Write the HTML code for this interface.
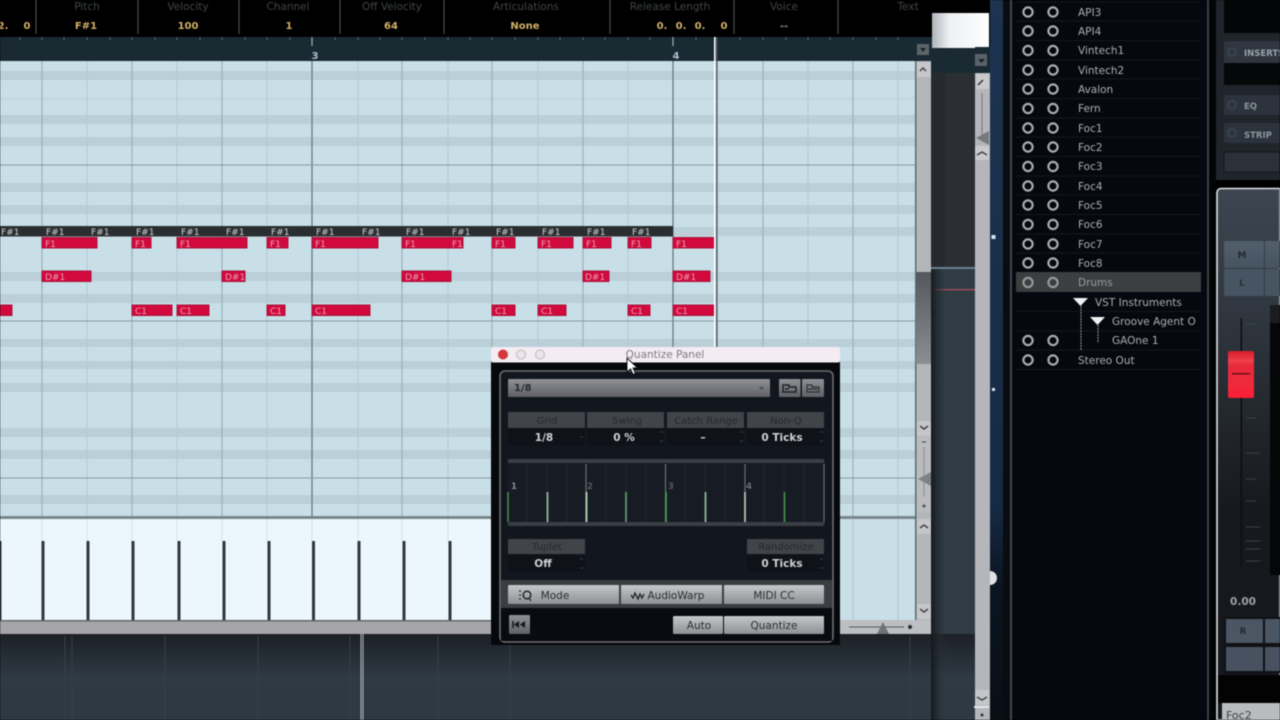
<!DOCTYPE html>
<html><head><meta charset="utf-8"><title>Quantize Panel</title>
<style>
html,body{margin:0;padding:0;background:#000;width:1280px;height:720px;overflow:hidden}
svg{display:block;filter:blur(.55px);overflow:hidden}
text{font-family:"DejaVu Sans","Liberation Sans",sans-serif}
.h{font-size:10.5px;fill:#3f4549;text-anchor:middle}
.v{font-size:10px;fill:#d2b068;font-weight:bold;text-anchor:middle}
.n{font-size:9px;fill:#e8a0b4}
.f{font-size:9px;fill:#d0d2d4}
.l{font-size:10.5px;fill:#abaeb2}
.q{font-size:10px;fill:#25292e;text-anchor:middle}
.w{font-size:10.5px;fill:#cfd1d4;font-weight:bold;text-anchor:middle}
.b{font-size:10.5px;fill:#2a2d31;text-anchor:middle}
</style></head><body>
<svg width="1280" height="720" viewBox="0 0 1280 720" xmlns="http://www.w3.org/2000/svg">
<defs>
<linearGradient id="dk" x1="0" y1="0" x2="0" y2="1"><stop offset="0" stop-color="#1c2026"/><stop offset=".5" stop-color="#2f3a43"/><stop offset="1" stop-color="#2e3943"/></linearGradient>
<linearGradient id="wb" x1="0" y1="0" x2="1" y2="0"><stop offset="0" stop-color="#aeb4ba"/><stop offset=".3" stop-color="#eef0f3"/><stop offset="1" stop-color="#fff"/></linearGradient>
<linearGradient id="dd" x1="0" y1="0" x2="0" y2="1"><stop offset="0" stop-color="#8f9196"/><stop offset="1" stop-color="#5f6166"/></linearGradient>
<linearGradient id="bt" x1="0" y1="0" x2="0" y2="1"><stop offset="0" stop-color="#c6c7ca"/><stop offset="1" stop-color="#8e9094"/></linearGradient>
<linearGradient id="st" x1="0" y1="0" x2="0" y2="1"><stop offset="0" stop-color="#3d4651"/><stop offset=".3" stop-color="#2c323a"/><stop offset=".6" stop-color="#17191e"/><stop offset="1" stop-color="#15181d"/></linearGradient>
<linearGradient id="ms" x1="0" y1="0" x2="0" y2="1"><stop offset="0" stop-color="#525f6c"/><stop offset="1" stop-color="#465361"/></linearGradient>
<linearGradient id="red" x1="0" y1="0" x2="0" y2="1"><stop offset="0" stop-color="#d81c2a"/><stop offset=".22" stop-color="#f0404c"/><stop offset=".3" stop-color="#e8293a"/><stop offset=".7" stop-color="#ee2a3c"/><stop offset="1" stop-color="#ff1d35"/></linearGradient>
<linearGradient id="th" x1="0" y1="0" x2="0" y2="1"><stop offset="0" stop-color="#54585c"/><stop offset="1" stop-color="#8b8e92"/></linearGradient>
<linearGradient id="bl" x1="0" y1="0" x2="0" y2="1"><stop offset="0" stop-color="#1d3450"/><stop offset=".7" stop-color="#172a45"/><stop offset=".82" stop-color="#0b1420"/><stop offset="1" stop-color="#0a0f16"/></linearGradient>
<linearGradient id="sh" x1="0" y1="0" x2="1" y2="0"><stop offset="0" stop-color="#14181c"/><stop offset="1" stop-color="#2d3840" stop-opacity="0"/></linearGradient>
</defs>

<rect width="1280" height="720" fill="#000"/>

<!-- info bar -->
<rect x="0" y="0" width="932" height="37" fill="#000"/>
<g stroke="#4a4c4d" stroke-width="1.2"><path d="M36 0V34M138 0V34M239 0V34M340 0V34M444 0V34M610 0V34M734 0V34M838 0V34"/></g>
<text class="h" x="87" y="10">Pitch</text><text class="h" x="188" y="10">Velocity</text><text class="h" x="288" y="10">Channel</text><text class="h" x="392" y="10">Off Velocity</text><text class="h" x="526" y="10">Articulations</text><text class="h" x="670" y="10">Release Length</text><text class="h" x="784" y="10">Voice</text><text class="h" x="908" y="10">Text</text>
<text class="v" x="3" y="29">2.</text><text class="v" x="27" y="29">0</text><text class="v" x="86" y="29">F#1</text><text class="v" x="188" y="29">100</text><text class="v" x="289" y="29">1</text><text class="v" x="391" y="29">64</text><text class="v" x="525" y="29">None</text>
<text class="v" x="662" y="29">0.</text><text class="v" x="681" y="29">0.</text><text class="v" x="700" y="29">0.</text><text class="v" x="724" y="29">0</text>
<text class="v" x="784" y="29" style="fill:#888">--</text>

<!-- ruler -->
<rect x="0" y="37" width="932" height="24" fill="#1a2a33"/>
<g stroke="#5c6a72" stroke-width="1"><path d="M20 37v3M42 37v3M64 37v3M87 37v3M110 37v3M132 37v3M155 37v3M177 37v3M200 37v3M222 37v3M245 37v3M267 37v3M290 37v3M335 37v3M358 37v3M380 37v3M402 37v3M425 37v3M448 37v3M470 37v3M492 37v3M515 37v3M538 37v3M560 37v3M583 37v3M605 37v3M628 37v3M650 37v3M696 37v3M740 37v3M763 37v3M786 37v3M808 37v3M830 37v3M853 37v3M876 37v3M898 37v3"/></g>
<path d="M312 37v9M673 37v9" stroke="#9fb0ba" stroke-width="1.2"/>
<text x="315" y="59" font-size="10" font-weight="bold" fill="#a9c0cc" text-anchor="middle">3</text>
<text x="676" y="59" font-size="10" font-weight="bold" fill="#a9c0cc" text-anchor="middle">4</text>

<!-- grid -->
<rect x="0" y="61" width="916" height="457" fill="#c9dfe8"/>
<g fill="#bbcfd9">
<rect x="0" y="71" width="916" height="9"/><rect x="0" y="97" width="916" height="3" fill="#c3d8e2"/><rect x="0" y="115" width="916" height="9"/><rect x="0" y="137" width="916" height="9"/><rect x="0" y="183" width="916" height="9"/><rect x="0" y="205" width="916" height="9"/><rect x="0" y="227" width="916" height="9"/><rect x="0" y="272" width="916" height="9"/><rect x="0" y="294" width="916" height="9"/><rect x="0" y="339" width="916" height="8"/><rect x="0" y="361" width="916" height="8"/><rect x="0" y="383" width="916" height="9"/><rect x="0" y="428" width="916" height="9"/><rect x="0" y="450" width="916" height="9"/><rect x="0" y="495" width="916" height="9"/>
</g>
<g stroke="#b2c8d2" stroke-width="1"><path d="M87 61V518M177 61V518M267 61V518M358 61V518M448 61V518M538 61V518M628 61V518M718 61V518M808 61V518M898 61V518"/></g>
<g stroke="#9ab1bb" stroke-width="1.200"><path d="M42 61V518M132 61V518M222 61V518M402 61V518M492 61V518M583 61V518M763 61V518M853 61V518"/></g>
<g stroke="#61747e" stroke-width="1.200"><path d="M312 61V518M673 61V518"/></g>
<g stroke="#84999f" stroke-width="1"><path d="M0 165H916M0 321H916M0 478H916"/></g>

<!-- F#1 strip -->
<rect x="0" y="226" width="673" height="10.5" fill="#2b2e31"/>
<text class="f" x="1" y="235">F#1</text><text class="f" x="46" y="235">F#1</text><text class="f" x="91" y="235">F#1</text><text class="f" x="136" y="235">F#1</text><text class="f" x="181" y="235">F#1</text><text class="f" x="226" y="235">F#1</text><text class="f" x="271" y="235">F#1</text><text class="f" x="316" y="235">F#1</text><text class="f" x="362" y="235">F#1</text><text class="f" x="406" y="235">F#1</text><text class="f" x="452" y="235">F#1</text><text class="f" x="496" y="235">F#1</text><text class="f" x="542" y="235">F#1</text><text class="f" x="587" y="235">F#1</text><text class="f" x="632" y="235">F#1</text>

<!-- notes -->
<g fill="#d2093c" stroke="#a8133c" stroke-width="1">
<rect x="42" y="237.5" width="55" height="10.5"/><rect x="132" y="237.5" width="19" height="10.5"/><rect x="177" y="237.5" width="70" height="10.5"/><rect x="267" y="237.5" width="21" height="10.5"/><rect x="312" y="237.5" width="66" height="10.5"/><rect x="402" y="237.5" width="61" height="10.5"/><rect x="492" y="237.5" width="23" height="10.5"/><rect x="538" y="237.5" width="35" height="10.5"/><rect x="583" y="237.5" width="28" height="10.5"/><rect x="628" y="237.5" width="23" height="10.5"/><rect x="673" y="237.5" width="42" height="10.5"/>
<rect x="42" y="271" width="49" height="10.5"/><rect x="222" y="271" width="23" height="10.5"/><rect x="402" y="271" width="49" height="10.5"/><rect x="583" y="271" width="26" height="10.5"/><rect x="673" y="271" width="37" height="10.5"/>
<rect x="0" y="305" width="12" height="10.5"/><rect x="132" y="305" width="40" height="10.5"/><rect x="177" y="305" width="32" height="10.5"/><rect x="267" y="305" width="18" height="10.5"/><rect x="312" y="305" width="58" height="10.5"/><rect x="492" y="305" width="23" height="10.5"/><rect x="538" y="305" width="28" height="10.5"/><rect x="628" y="305" width="22" height="10.5"/><rect x="673" y="305" width="42" height="10.5"/>
</g>
<text class="n" x="45" y="247">F1</text><text class="n" x="135" y="247">F1</text><text class="n" x="180" y="247">F1</text><text class="n" x="270" y="247">F1</text><text class="n" x="315" y="247">F1</text><text class="n" x="405" y="247">F1</text><text class="n" x="452" y="247">F1</text><text class="n" x="495" y="247">F1</text><text class="n" x="541" y="247">F1</text><text class="n" x="586" y="247">F1</text><text class="n" x="631" y="247">F1</text><text class="n" x="676" y="247">F1</text>
<text class="n" x="45" y="280">D#1</text><text class="n" x="225" y="280">D#1</text><text class="n" x="405" y="280">D#1</text><text class="n" x="585" y="280">D#1</text><text class="n" x="676" y="280">D#1</text>
<text class="n" x="135" y="314">C1</text><text class="n" x="180" y="314">C1</text><text class="n" x="270" y="314">C1</text><text class="n" x="315" y="314">C1</text><text class="n" x="495" y="314">C1</text><text class="n" x="541" y="314">C1</text><text class="n" x="631" y="314">C1</text><text class="n" x="676" y="314">C1</text>

<!-- playhead -->
<rect x="714" y="37" width="1.6" height="481" fill="#fff"/><rect x="716" y="37" width="1.4" height="481" fill="#4c5a62"/>

<!-- key lane -->
<rect x="0" y="516" width="931" height="3" fill="#7a878d"/>
<rect x="0" y="519" width="500" height="101" fill="#ebf6fd"/>
<rect x="840" y="519" width="76" height="101" fill="#c9dfe8"/>
<path d="M853 519V620M898 519V620" stroke="#adc3cd" stroke-width="1"/>
<g stroke="#d2e3eb" stroke-width="1"><path d="M42 519V541M87 519V541M132 519V541M177 519V541M222 519V541M267 519V541M312 519V541M358 519V541M402 519V541M448 519V541"/></g>
<g stroke="#31373d" stroke-width="3"><path d="M0 541V620M43 541V620M88 541V620M133 541V620M179 541V620M224 541V620M269 541V620M313.500 541V620M359 541V620M404 541V620M450 541V620"/></g>
<rect x="0" y="620" width="931" height="14" fill="#a6a5aa"/>
<rect x="0" y="620" width="500" height="1.500" fill="#64686d"/>

<!-- lower dark area -->
<rect x="0" y="634" width="976" height="86" fill="url(#dk)"/>
<g stroke="#353f48" stroke-width="1"><path d="M65 636V720M72 636V720M165 636V720M258 636V720M350 636V720M438 636V720M510 636V720M910 636V720"/></g>
<path d="M361 634V720M363 634V720" stroke="#c4ccd2" stroke-width=".9"/>

<!-- right scroll strip of editor -->
<rect x="916" y="61" width="15" height="559" fill="#b4b7ba"/>
<rect x="915" y="61" width="1.500" height="559" fill="#5c6a72"/>
<rect x="917" y="44" width="12" height="11" fill="#5c6468"/><path d="M920 48h6l-3 4z" fill="#1d2226"/>
<rect x="917" y="62" width="14" height="15" fill="#c4c6c9"/><path d="M920 71l3-3 3 3" fill="none" stroke="#444" stroke-width="1.500"/>
<rect x="916" y="272" width="15" height="92" fill="url(#th)"/>
<rect x="917" y="421" width="14" height="15" fill="#c4c6c9"/><path d="M920 426l4 3 4-3" fill="none" stroke="#444" stroke-width="1.500"/>
<rect x="917" y="437" width="14" height="75" fill="#b9bbbe"/>
<path d="M924 447V497" stroke="#8a8d90" stroke-width="1"/><path d="M918 479l13-7v14z" fill="#7e8284"/>
<path d="M922 442h4M922 506h4M924 504v4" stroke="#444" stroke-width="1"/>
<rect x="917" y="519" width="14" height="15" fill="#c4c6c9"/><path d="M920 528l4-3 4 3" fill="none" stroke="#444" stroke-width="1.500"/>
<rect x="917" y="604" width="14" height="15" fill="#c4c6c9"/><path d="M920 609l4 3 4-3" fill="none" stroke="#444" stroke-width="1.500"/>
<rect x="840" y="620" width="91" height="14" fill="#bcbec1"/>
<path d="M849 627H904" stroke="#55595c" stroke-width="1"/><path d="M883 622l-6 12h12z" fill="#6f7376"/><circle cx="910" cy="627" r="2" fill="#2a2d30"/>

<!-- column -->
<rect x="931" y="47" width="45" height="26" fill="#1a2a33"/>
<rect x="931" y="73" width="45" height="194" fill="#26292d"/>
<rect x="945" y="73" width="31" height="194" fill="#2b2e32"/>
<rect x="931" y="267" width="45" height="2" fill="#6a8090"/>
<rect x="931" y="269" width="45" height="365" fill="#303b43"/>
<rect x="931" y="289" width="45" height="1.200" fill="#b0505f"/>
<rect x="931" y="269" width="16" height="451" fill="url(#sh)"/>
<rect x="932" y="13" width="57" height="35" fill="url(#wb)"/>
<rect x="975" y="47" width="15" height="26" fill="#1a2a33"/>
<rect x="975" y="73" width="15" height="647" fill="#b4b6bb"/>
<rect x="975" y="54" width="12" height="12" fill="#5a6368"/><path d="M978 59h7l-3.500 4z" fill="#1d2226"/>
<rect x="976" y="74" width="13" height="15" fill="#c8cacc"/><path d="M978 85l5-5" stroke="#333" stroke-width="1.500"/>
<path d="M982 93V140" stroke="#777" stroke-width="1"/><path d="M976 138l13-7v14z" fill="#777a7c"/>
<rect x="975" y="146" width="14" height="14" fill="#c8cacc"/><path d="M977 155l5-3 5 3" fill="none" stroke="#444" stroke-width="1.500"/>
<rect x="975" y="690" width="14" height="15" fill="#c4c6c9"/><path d="M977 697l5 3 5-3" fill="none" stroke="#444" stroke-width="1.500"/>
<rect x="974" y="706" width="15" height="2" fill="#e6e7e9"/><circle cx="982" cy="715" r="1.500" fill="#333"/>

<!-- blue strip -->
<rect x="990" y="0" width="13" height="720" fill="url(#bl)"/>
<rect x="991.500" y="235" width="4" height="4" fill="#d7e4f0"/><rect x="992" y="388" width="3" height="3" fill="#d7e4f0"/>
<path d="M990 571a7 7 0 0 1 0 14z" fill="#dfe3e6"/>

<!-- list -->
<rect x="1003" y="0" width="7" height="720" fill="#090c10"/>
<rect x="1010" y="0" width="2" height="720" fill="#44484c"/>
<rect x="1012" y="0" width="196" height="720" fill="#05090f"/>
<rect x="1207" y="0" width="2" height="720" fill="#3c4044"/>
<rect x="1209" y="0" width="7" height="720" fill="#030406"/>
<g stroke="#14181c" stroke-width="1"><path d="M1016 2H1200M1016 21H1200M1016 40.500H1200M1016 60H1200M1016 79H1200M1016 98.500H1200M1016 118H1200M1016 137H1200M1016 156.500H1200M1016 176H1200M1016 195H1200M1016 214.500H1200M1016 234H1200M1016 253H1200M1016 311.500H1200M1016 331H1200M1016 350H1200M1016 369.500H1200"/></g>
<rect x="1016" y="272" width="185" height="20" fill="#3c3e40"/>
<g fill="none" stroke="#a9acaf" stroke-width="2.200">
<circle cx="1028" cy="12" r="4.600"/><circle cx="1053" cy="12" r="4.600"/><circle cx="1028" cy="31" r="4.600"/><circle cx="1053" cy="31" r="4.600"/><circle cx="1028" cy="50.500" r="4.600"/><circle cx="1053" cy="50.500" r="4.600"/><circle cx="1028" cy="70" r="4.600"/><circle cx="1053" cy="70" r="4.600"/><circle cx="1028" cy="89" r="4.600"/><circle cx="1053" cy="89" r="4.600"/><circle cx="1028" cy="108.500" r="4.600"/><circle cx="1053" cy="108.500" r="4.600"/><circle cx="1028" cy="128" r="4.600"/><circle cx="1053" cy="128" r="4.600"/><circle cx="1028" cy="147" r="4.600"/><circle cx="1053" cy="147" r="4.600"/><circle cx="1028" cy="166.500" r="4.600"/><circle cx="1053" cy="166.500" r="4.600"/><circle cx="1028" cy="186" r="4.600"/><circle cx="1053" cy="186" r="4.600"/><circle cx="1028" cy="205" r="4.600"/><circle cx="1053" cy="205" r="4.600"/><circle cx="1028" cy="224.500" r="4.600"/><circle cx="1053" cy="224.500" r="4.600"/><circle cx="1028" cy="244" r="4.600"/><circle cx="1053" cy="244" r="4.600"/><circle cx="1028" cy="263" r="4.600"/><circle cx="1053" cy="263" r="4.600"/><circle cx="1028" cy="282.500" r="4.600" stroke="#96999c"/><circle cx="1053" cy="282.500" r="4.600" stroke="#96999c"/><circle cx="1028" cy="340.500" r="4.600"/><circle cx="1053" cy="340.500" r="4.600"/><circle cx="1028" cy="360" r="4.600"/><circle cx="1053" cy="360" r="4.600"/>
</g>
<text class="l" x="1078" y="16">API3</text><text class="l" x="1078" y="35">API4</text><text class="l" x="1078" y="54">Vintech1</text><text class="l" x="1078" y="74">Vintech2</text><text class="l" x="1078" y="93">Avalon</text><text class="l" x="1078" y="112">Fern</text><text class="l" x="1078" y="132">Foc1</text><text class="l" x="1078" y="151">Foc2</text><text class="l" x="1078" y="170">Foc3</text><text class="l" x="1078" y="190">Foc4</text><text class="l" x="1078" y="209">Foc5</text><text class="l" x="1078" y="228">Foc6</text><text class="l" x="1078" y="248">Foc7</text><text class="l" x="1078" y="267">Foc8</text><text class="l" x="1078" y="286" style="fill:#9a9da0">Drums</text>
<text class="l" x="1095" y="306">VST Instruments</text><text class="l" x="1112" y="325">Groove Agent O</text><text class="l" x="1112" y="344">GAOne 1</text><text class="l" x="1078" y="364">Stereo Out</text>
<path d="M1073 298h15l-7.500 8z" fill="#f0f1f2"/><path d="M1090 317h15l-7.500 8z" fill="#f0f1f2"/>
<path d="M1081 306V350" stroke="#9a9da0" stroke-width="1" stroke-dasharray="2 1"/><path d="M1098 325V342" stroke="#9a9da0" stroke-width="1" stroke-dasharray="2 1"/>

<!-- mixer top -->
<rect x="1216" y="0" width="64" height="180" fill="#20252c"/>
<rect x="1224" y="0" width="56" height="33" fill="#040506"/>
<rect x="1224" y="41" width="56" height="22" rx="2" fill="#2f3640"/>
<circle cx="1232" cy="52" r="4" fill="none" stroke="#3d4752" stroke-width="1.500"/>
<text x="1244" y="56" font-size="8.500" font-weight="bold" fill="#9ba2a9">INSERTS</text>
<rect x="1224" y="63" width="56" height="22" fill="#060708"/>
<rect x="1224" y="95" width="56" height="20" rx="2" fill="#2c333c"/>
<circle cx="1232" cy="105" r="4" fill="none" stroke="#3d4752" stroke-width="1.500"/>
<text x="1244" y="109" font-size="8.500" font-weight="bold" fill="#8e959c">EQ</text>
<rect x="1224" y="123" width="56" height="20" rx="2" fill="#2c333c"/>
<circle cx="1232" cy="133" r="4" fill="none" stroke="#3d4752" stroke-width="1.500"/>
<text x="1244" y="138" font-size="8.500" font-weight="bold" fill="#8e959c">STRIP</text>
<rect x="1224" y="152" width="56" height="20" rx="2" fill="#2b3039" stroke="#14171b"/>

<!-- channel strip -->
<path d="M1280 188.500H1221a4 4 0 0 0-4 4V720H1280z" fill="url(#st)" stroke="#dfe2e5" stroke-width="1.600"/>
<rect x="1224" y="241" width="40" height="27" rx="2" fill="url(#ms)"/><rect x="1265" y="241" width="15" height="27" fill="url(#ms)"/>
<rect x="1224" y="269" width="40" height="27" rx="2" fill="#475563"/><rect x="1265" y="269" width="15" height="27" fill="#475563"/>
<text x="1242" y="258" font-size="9" font-weight="bold" fill="#23292f" text-anchor="middle">M</text>
<text x="1242" y="286" font-size="9" font-weight="bold" fill="#2a3138" text-anchor="middle">L</text>
<rect x="1270" y="305" width="10" height="270" fill="#050607"/><rect x="1270" y="305" width="10" height="18" fill="#1a1c1f"/>
<rect x="1240.500" y="318" width="1.600" height="248" fill="#0c0e11"/>
<g stroke="#3c4248" stroke-width="1"><path d="M1246 324h10M1246 373h6M1246 418h10M1246 453h14M1246 479h10M1246 501h10M1246 527h14M1246 541h14M1246 549h14M1246 561h14"/></g>
<rect x="1228" y="351" width="26" height="47" rx="2" fill="url(#red)"/>
<rect x="1232" y="373" width="18" height="1.500" fill="#6a0f18"/>
<text x="1243" y="605" font-size="10.500" font-weight="bold" fill="#9ea1a5" text-anchor="middle">0.00</text>
<rect x="1224" y="617" width="56" height="56" fill="#0f1114"/>
<rect x="1226" y="619" width="37" height="24" fill="#4b5664"/><rect x="1265" y="619" width="15" height="24" fill="#4b5664"/>
<rect x="1226" y="647" width="37" height="24" fill="#47515f"/><rect x="1265" y="647" width="15" height="24" fill="#47515f"/>
<text x="1243" y="634" font-size="9" font-weight="bold" fill="#23292f" text-anchor="middle">R</text>
<rect x="1218" y="675" width="62" height="28" fill="#030304"/>
<rect x="1222" y="703" width="58" height="17" fill="#b9bcbe"/>
<text x="1226" y="719" font-size="11" fill="#3d4247">Foc2</text>

<!-- quantize panel -->
<rect x="491" y="360" width="349" height="285" fill="#06080c"/>
<rect x="491" y="347" width="349" height="15.500" rx="2" fill="#f4ecf2"/>
<circle cx="503" cy="354.500" r="5" fill="#d4383c"/><circle cx="521" cy="354.500" r="4.500" fill="#ece6e9" stroke="#bdb8bb"/><circle cx="540" cy="354.500" r="4.500" fill="#ece6e9" stroke="#bdb8bb"/>
<text x="665" y="358" font-size="10.500" fill="#7c7c80" text-anchor="middle">Quantize Panel</text>
<rect x="500" y="371" width="333" height="271" rx="5" fill="#12161e" stroke="#6b6e72" stroke-width="1.600"/>
<rect x="508" y="379" width="262" height="18" rx="1" fill="url(#dd)"/>
<text x="514" y="391" font-size="10" font-weight="bold" fill="#25282c">1/8</text>
<path d="M759 387h5l-2.500 3z" fill="#4a4c50"/>
<rect x="779" y="379" width="21.500" height="18" rx="1" fill="url(#dd)"/><rect x="802" y="379" width="22" height="18" rx="1" fill="url(#dd)"/>
<path d="M783 385h6v2h7v5h-13zM785 389h4" fill="none" stroke="#1f2226" stroke-width="1.500"/>
<path d="M807 385h5v2h7v5h-12zM808 389h10" fill="none" stroke="#2e3135" stroke-width="1.200"/>
<rect x="508" y="412" width="77" height="16" fill="#414449"/><rect x="587" y="412" width="77" height="16" fill="#414449"/><rect x="667" y="412" width="77" height="16" fill="#414449"/><rect x="747" y="412" width="77" height="16" fill="#414449"/>
<text class="q" x="547" y="424">Grid</text><text class="q" x="627" y="424">Swing</text><text class="q" x="706" y="424">Catch Range</text><text class="q" x="786" y="424">Non-Q</text>
<rect x="508" y="428" width="77" height="18" fill="#0f1319"/><rect x="587" y="428" width="77" height="18" fill="#0f1319"/><rect x="667" y="428" width="77" height="18" fill="#0f1319"/><rect x="747" y="428" width="77" height="18" fill="#0f1319"/>
<text class="w" x="544" y="441">1/8</text><text class="w" x="624" y="441">0 %</text><text class="w" x="703" y="441">–</text><text class="w" x="782" y="441">0 Ticks</text>
<path d="M580 437h3M660 432h3M660 441h3M740 432h3M740 441h3M820 432h3M820 441h3" stroke="#3b3e43" stroke-width="1"/>

<!-- grid graph -->
<rect x="507.500" y="459" width="317" height="67" rx="3" fill="#171b23"/>
<rect x="507.500" y="459" width="317" height="4" rx="2" fill="#3a3e45"/><rect x="507.500" y="522" width="317" height="4" rx="2" fill="#3a3e45"/>
<g stroke="#222730" stroke-width="1"><path d="M527 463V522M547 463V522M567 463V522M606 463V522M626 463V522M646 463V522M685 463V522M705 463V522M725 463V522M764 463V522M784 463V522M804 463V522"/></g>
<g stroke="#6a6e74" stroke-width="1.200"><path d="M586 464V522M665.500 464V522M745 464V522M824 464V522"/></g>
<g stroke-width="1.800"><path d="M508 492V522" stroke="#3f8044"/><path d="M547.500 492V522" stroke="#8fb59a"/><path d="M586.500 492V522" stroke="#b3d4b3"/><path d="M626 492V522" stroke="#5f9868"/><path d="M666 492V522" stroke="#439a4b"/><path d="M705.500 492V522" stroke="#8ab898"/><path d="M745 492V522" stroke="#a9c2af"/><path d="M784.500 492V522" stroke="#3f8a4a"/></g>
<g font-size="8.500" font-weight="bold" fill="#858a90"><text x="511" y="489">1</text><text x="587" y="489" fill="#555a60">2</text><text x="668" y="489" fill="#555a60">3</text><text x="746" y="489" fill="#6a6e74">4</text></g>

<rect x="508" y="539" width="77" height="15" fill="#414449"/><rect x="747" y="539" width="77" height="15" fill="#414449"/>
<text class="q" x="547" y="550">Tuplet</text><text class="q" x="786" y="550">Randomize</text>
<rect x="508" y="555" width="77" height="17" fill="#0f1319"/><rect x="747" y="555" width="77" height="17" fill="#0f1319"/>
<text class="w" x="543" y="567">Off</text><text class="w" x="782" y="567">0 Ticks</text>
<path d="M580 559h3M580 568h3M820 559h3M820 568h3" stroke="#3b3e43" stroke-width="1"/>

<rect x="501" y="580" width="331" height="28" fill="#3a3d42"/>
<rect x="508" y="585" width="111" height="19" rx="1" fill="url(#bt)"/><rect x="621" y="585" width="101" height="19" fill="url(#bt)"/><rect x="724" y="585" width="100" height="19" rx="1" fill="url(#bt)"/>
<circle cx="527" cy="595" r="3.800" fill="none" stroke="#2a2d31" stroke-width="1.600"/><path d="M519 591h2M519 595h2M519 599h2M529 598l2 3" stroke="#2a2d31" stroke-width="1.300"/>
<text class="b" x="555" y="599">Mode</text>
<path d="M631 595l2 3 2-5 3 6 2-5 2 4 2-4" fill="none" stroke="#222" stroke-width="1.300"/>
<text class="b" x="676" y="599">AudioWarp</text>
<text class="b" x="774" y="599">MIDI CC</text>
<rect x="501" y="608" width="331" height="33" fill="#090b10"/>
<rect x="509" y="615" width="21" height="19" rx="1" fill="url(#dd)"/>
<path d="M513 621v7" stroke="#15171a" stroke-width="1.500"/><path d="M519 621l-5 3.500 5 3.500zM525 621l-5 3.500 5 3.500z" fill="#15171a"/>
<rect x="673" y="616" width="50" height="18" rx="1" fill="url(#bt)"/><rect x="724" y="616" width="100" height="18" rx="1" fill="url(#bt)"/>
<text class="b" x="699" y="629">Auto</text><text class="b" x="774" y="629">Quantize</text>

<!-- cursor -->
<path d="M627 358v14l3.500-3 2.500 5.500 2.500-1.200-2.500-5.300h4.500z" fill="#fff" stroke="#111" stroke-width="1"/>
</svg>
</body></html>
